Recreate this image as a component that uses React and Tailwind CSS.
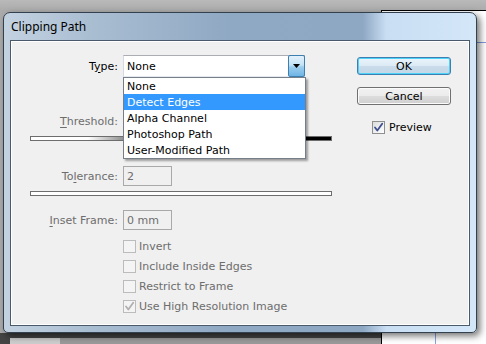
import React from "react";

function Check({ color }) {
  return (
    <svg width="11" height="11" viewBox="0 0 11 11" className="block">
      <path d="M2 5.5 L4.3 8.5 L9.2 1.8" fill="none" stroke={color} strokeWidth="1.8" strokeLinecap="round" strokeLinejoin="round" />
    </svg>
  );
}

function DisabledBox({ checked, label }) {
  return (
    <div className="flex h-[20px] items-center">
      <div className="flex h-[13px] w-[13px] items-center justify-center border border-[#bcbcbc] bg-[#f4f4f4]">
        {checked && <Check color="#b0b0b0" />}
      </div>
      <span className="ml-[3px] text-[#6d6d6d]">{label}</span>
    </div>
  );
}

export default function App() {
  const items = ["None", "Detect Edges", "Alpha Channel", "Photoshop Path", "User-Modified Path"];
  return (
    <div className="relative h-[344px] w-[486px] overflow-hidden bg-[#ababab] font-['DejaVu_Sans',sans-serif] text-[11px] leading-none text-black">
      {/* background: pasteboard and page */}
      <div className="flex h-full flex-col">
        <div className="h-[10px] bg-[linear-gradient(to_bottom,#b9b9b9,#acacac)]" />
        <div className="flex flex-1">
          <div className="flex w-[381px] flex-col bg-[#ababab]">
            <div className="flex-1" />
            <div className="flex h-[11px] items-end bg-[#444444]">
              <div className="ml-[10px] h-[6px] w-[50px] bg-[#cdcdcd]" />
              <div className="h-[6px] flex-1 bg-[#9a9a9a]" />
            </div>
          </div>
          <div className="flex flex-1 flex-col border-l border-t border-black bg-white">
            <div className="h-[32px] border-b border-[#7f9be0]" />
            <div className="flex flex-1">
              <div className="w-[54px] border-r border-[#8aa2e0]" />
            </div>
          </div>
        </div>
      </div>

      {/* dialog window */}
      <div className="absolute left-[3px] top-[12px] flex h-[321px] w-[474px] flex-col rounded-b-[5px] rounded-t-[7px] border border-[#33404d] bg-[linear-gradient(to_right,#c3d2e1_0%,#aabed2_18%,#8fa8c3_48%,#8ea7c3_76%,#c9def3_81%,#d4e7f9_100%)] shadow-[3px_3px_7px_rgba(0,0,0,0.55)]">
        <div className="flex h-[27px] items-center pl-[7px] pt-[1px] font-['Noto_Sans',sans-serif] text-[12px] text-black">
          Clipping Path
        </div>
        <div className="mx-[6px] mb-[6px] flex flex-1 border border-[#4a5a6b] bg-[#f0f0f0] shadow-[inset_0_0_0_1px_#ffffff]">
          {/* left column */}
          <div className="flex w-[321px] flex-col pl-[19px]">
            <div className="mt-[14px] flex h-[22px] items-center">
              <div className="w-[88px] text-right">
                T<span className="underline underline-offset-2">y</span>pe:
              </div>
              <div className="relative ml-[5px] flex h-[22px] w-[182px] border border-[#abadb3] border-l-[#d5dae2] border-b-[#e3e9ef] bg-white">
                <div className="flex flex-1 items-center pl-[3px]">None</div>
                <div className="-my-[1px] -mr-[1px] flex w-[17px] items-center justify-center rounded-[2px] border border-[#3c7fb1] bg-[linear-gradient(to_bottom,#e3f1fb_0%,#c4e3f7_45%,#9ccdee_55%,#6fb4e4_100%)]">
                  <svg width="7" height="4" viewBox="0 0 7 4" className="block">
                    <path d="M0 0 H7 L3.5 4 Z" fill="#000" />
                  </svg>
                </div>
                {/* dropdown list */}
                <div className="absolute left-[-1px] top-[21px] z-10 flex w-[183px] flex-col border border-[#767e88] bg-white shadow-[2px_2px_2px_rgba(0,0,0,0.35)]">
                  {items.map((it) => (
                    <div
                      key={it}
                      className={
                        it === "Detect Edges"
                          ? "flex h-[16px] items-center bg-[#3399ff] pl-[3px] text-white"
                          : "flex h-[16px] items-center pl-[3px] text-black"
                      }
                    >
                      {it}
                    </div>
                  ))}
                </div>
              </div>
            </div>

            <div className="mt-[35px] flex h-[18px] items-center">
              <div className="w-[88px] text-right text-[#6d6d6d]">
                <span className="underline underline-offset-2">T</span>hreshold:
              </div>
            </div>
            <div className="mt-[6px] h-[5px] w-[302px] border border-[#6d6d6d] bg-[linear-gradient(to_right,#ffffff_19%,#000000_46%)]" />

            <div className="mt-[25px] flex h-[20px] items-center">
              <div className="w-[88px] text-right text-[#6d6d6d]">
                To<span className="underline underline-offset-2">l</span>erance:
              </div>
              <div className="ml-[5px] flex h-[20px] w-[49px] items-center border border-[#a9a9a9] pl-[3px] text-[#6d6d6d]">
                2
              </div>
            </div>
            <div className="mt-[5px] h-[5px] w-[302px] border border-[#6d6d6d] bg-white" />

            <div className="mt-[14px] flex h-[20px] items-center">
              <div className="w-[88px] text-right text-[#6d6d6d]">
                <span className="underline underline-offset-2">I</span>nset Frame:
              </div>
              <div className="ml-[5px] flex h-[20px] w-[49px] items-center border border-[#a9a9a9] pl-[3px] text-[#6d6d6d]">
                0 mm
              </div>
            </div>

            <div className="ml-[93px] mt-[6px] flex flex-col">
              <DisabledBox label="Invert" />
              <DisabledBox label="Include Inside Edges" />
              <DisabledBox label="Restrict to Frame" />
              <DisabledBox label="Use High Resolution Image" checked />
            </div>
          </div>

          {/* right column */}
          <div className="ml-[25px] flex w-[94px] flex-col">
            <div className="mt-[16px] flex h-[18px] items-center justify-center rounded-[3px] border border-[#3c7fb1] bg-[linear-gradient(to_bottom,#eaf4fb_0%,#dceaf5_50%,#cadceb_51%,#c2d6e6_100%)] shadow-[inset_0_0_0_1px_#4fd2f8]">
              OK
            </div>
            <div className="mt-[12px] flex h-[18px] items-center justify-center rounded-[3px] border border-[#707070] bg-[linear-gradient(to_bottom,#f2f2f2_0%,#ebebeb_50%,#dddddd_51%,#cfcfcf_100%)] shadow-[inset_0_0_0_1px_#fbfbfb]">
              Cancel
            </div>
            <div className="mt-[14px] flex h-[16px] items-center pl-[15px]">
              <div className="flex h-[13px] w-[13px] items-center justify-center border border-[#8e8f8f] bg-[linear-gradient(135deg,#dcdcdc,#ffffff)]">
                <Check color="#3d4f8f" />
              </div>
              <span className="ml-[4px]">Preview</span>
            </div>
          </div>
        </div>
      </div>
    </div>
  );
}
